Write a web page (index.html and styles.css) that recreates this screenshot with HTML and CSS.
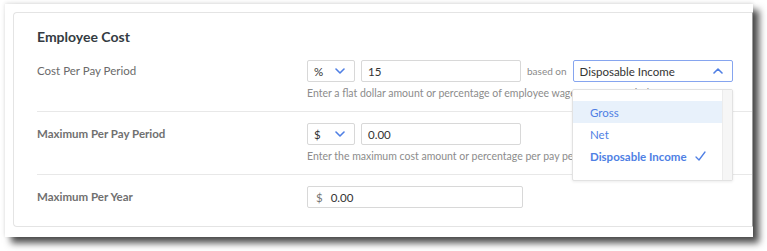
FILE: index.html
```html
<!DOCTYPE html>
<html lang="en">
<head>
  <meta charset="UTF-8" />
  <title>Employee Cost</title>
  <link rel="stylesheet" href="styles.css">
</head>
<body>

<div class="frame">
  <div class="card">
    <h3 class="card-title">Employee Cost</h3>

    <!-- Cost per pay period -->
    <div class="row">
      <div class="row-label">Cost Per Pay Period</div>
      <div class="row-field">
        <div class="controls">
          <div class="select select-small">
            <span>%</span>
            <svg class="chevron" width="10" height="6" viewBox="0 0 10 6"><path d="M1 1l4 4 4-4" /></svg>
          </div>
          <div class="input">15</div>
          <span class="based-on">based on</span>
          <div class="select select-wide is-open">
            <span>Disposable Income</span>
            <svg class="chevron" width="10" height="6" viewBox="0 0 10 6"><path d="M1 5l4-4 4 4" /></svg>
          </div>
        </div>
        <div class="hint">Enter a flat dollar amount or percentage of employee wages per pay period</div>
      </div>
    </div>

    <!-- Maximum per pay period -->
    <div class="row">
      <div class="row-label strong">Maximum Per Pay Period</div>
      <div class="row-field">
        <div class="controls">
          <div class="select select-small">
            <span>$</span>
            <svg class="chevron" width="10" height="6" viewBox="0 0 10 6"><path d="M1 1l4 4 4-4" /></svg>
          </div>
          <div class="input">0.00</div>
        </div>
        <div class="hint">Enter the maximum cost amount or percentage per pay period</div>
      </div>
    </div>

    <!-- Maximum per year -->
    <div class="row last">
      <div class="row-label strong">Maximum Per Year</div>
      <div class="row-field">
        <div class="controls">
          <div class="input input-money"><span class="prefix">$</span>0.00</div>
        </div>
      </div>
    </div>
  </div>

  <!-- Dropdown menu (open) -->
  <div class="menu">
    <ul class="menu-list">
      <li class="menu-item hover">Gross</li>
      <li class="menu-item">Net</li>
      <li class="menu-item selected">Disposable Income
        <svg class="check" width="11" height="10" viewBox="0 0 11 10"><path d="M1 6l3 3 6-8" /></svg>
      </li>
    </ul>
    <div class="menu-track"></div>
  </div>
</div>

</body>
</html>
```

FILE: styles.css
```css
* {
  box-sizing: border-box;
}

html,
body {
  height: 251px;
}

body {
  margin: 0;
  padding: 4px 0 0 5px;
  background: #fff;
  font-family: Lato, 'Open Sans', sans-serif;
  color: #333;
  overflow: hidden;
}

/* Window frame */
.frame {
  position: relative;
  padding: 8px 0 0 8px;
  width: 748px;
  height: 233px;
  background: #fff;
  box-shadow: 0 -1px 4px rgba(0, 0, 0, 0.12), 6px 6px 7px rgba(0, 0, 0, 0.7);
}

.card {
  width: 740px;
  height: 215px;
  border: 1px solid #e4e4e4;
  border-right-color: #9c9c9c;
  border-radius: 4px 0 0 4px;
  padding: 0 0 0 23px;
}

.card-title {
  margin: 15px 0 0;
  font-size: 14px;
  line-height: 18px;
  font-weight: 700;
  color: #343b42;
}

/* Rows */
.row {
  display: grid;
  grid-template-columns: 270px 1fr;
  padding: 11px 0 12px;
  border-bottom: 1px solid #e8e8e8;
}

.row:first-of-type {
  padding-top: 14px;
}

.row.last {
  border-bottom: none;
  padding-bottom: 0;
}

.row-label {
  font-size: 11.5px;
  line-height: 22px;
  color: #6a6a6a;
}

.row-label.strong {
  font-weight: 700;
  color: #707070;
}

.controls {
  display: flex;
  align-items: center;
  gap: 6px;
}

.select,
.input {
  height: 22px;
  border: 1px solid #d8d8d8;
  border-radius: 2px;
  background: #fff;
  font-size: 11.5px;
  color: #333;
  display: flex;
  align-items: center;
}

.select {
  justify-content: space-between;
  padding: 0 9px 0 6px;
}

.select-small {
  width: 48px;
}

.select-wide {
  width: 160px;
  padding-left: 6px;
}

.select.is-open {
  border-color: #86a5ef;
}

.chevron path {
  fill: none;
  stroke: #4f7fe4;
  stroke-width: 1.6;
  stroke-linecap: round;
  stroke-linejoin: round;
}

.input {
  width: 160px;
  padding: 0 6px;
}

.input-money {
  width: 216px;
  padding-left: 8px;
}

.prefix {
  color: #777;
  margin-right: 8px;
}

.based-on {
  font-size: 10px;
  color: #8a8a8a;
}

.hint {
  margin-top: 6px;
  font-size: 10.5px;
  line-height: 11px;
  color: #8c8c8c;
  white-space: nowrap;
}

/* Open dropdown */
.menu {
  position: absolute;
  left: 567px;
  top: 85px;
  width: 161px;
  height: 92px;
  background: #fff;
  border: 1px solid #e2e2e2;
  border-radius: 2px;
  box-shadow: 0 1px 3px rgba(0, 0, 0, 0.08);
  display: flex;
}

.menu-list {
  list-style: none;
  margin: 0;
  padding: 11px 0 0;
  flex: 1;
}

.menu-item {
  height: 22px;
  padding-left: 17px;
  display: flex;
  align-items: center;
  font-size: 11.5px;
  color: #4f7fe4;
}

.menu-item.hover {
  background: #e8f1fb;
}

.menu-item.selected {
  font-weight: 700;
}

.check {
  margin-left: 8px;
}

.check path {
  fill: none;
  stroke: #4f7fe4;
  stroke-width: 1.3;
  stroke-linecap: round;
  stroke-linejoin: round;
}

.menu-track {
  width: 10px;
  background: #f6f6f6;
  border-left: 1px solid #ececec;
}
```
